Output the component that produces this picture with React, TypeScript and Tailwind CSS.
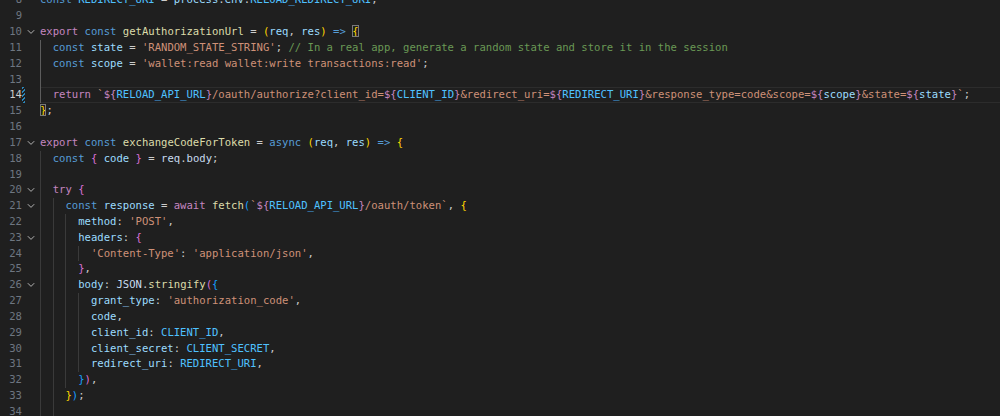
import React from 'react';

// token colours (VS Code Dark Modern-ish)
const KW = 'text-[#c586c0]';
const ST = 'text-[#569cd6]';
const FN = 'text-[#dcdcaa]';
const VA = 'text-[#9cdcfe]';
const VW = 'text-[#c8dcef]';
const CO = 'text-[#4fc1ff]';
const SR = 'text-[#ce9178]';
const CM = 'text-[#6a9955]';
const PN = 'text-[#cccccc]';
const TP = 'text-[#c586c0]';
const B1 = 'text-[#ffd700]';
const B2 = 'text-[#da70d6]';
const B3 = 'text-[#179fff]';
const MATCH = 'text-[#ffd700] outline outline-1 -outline-offset-1 outline-[#7a7a7a]';

type Tok = [string, string];

type Line = {
  n: number;
  indent: number;
  fold?: boolean;
  active?: boolean;
  toks: Tok[];
};

const lines: Line[] = [
  {
    n: 8,
    indent: 0,
    toks: [
      ['const ', ST],
      ['REDIRECT_URI', CO],
      [' = ', PN],
      ['process', VA],
      ['.', PN],
      ['env', VA],
      ['.', PN],
      ['RELOAD_REDIRECT_URI', CO],
      [';', PN],
    ],
  },
  { n: 9, indent: 0, toks: [] },
  {
    n: 10,
    indent: 0,
    fold: true,
    toks: [
      ['export ', KW],
      ['const ', ST],
      ['getAuthorizationUrl', FN],
      [' = ', PN],
      ['(', B1],
      ['req', VA],
      [', ', PN],
      ['res', VA],
      [')', B1],
      [' ', PN],
      ['=>', ST],
      [' ', PN],
      ['{', MATCH],
    ],
  },
  {
    n: 11,
    indent: 1,
    toks: [
      ['const ', ST],
      ['state', VA],
      [' = ', PN],
      ["'RANDOM_STATE_STRING'", SR],
      ['; ', PN],
      ['// In a real app, generate a random state and store it in the session', CM],
    ],
  },
  {
    n: 12,
    indent: 1,
    toks: [
      ['const ', ST],
      ['scope', VA],
      [' = ', PN],
      ["'wallet:read wallet:write transactions:read'", SR],
      [';', PN],
    ],
  },
  { n: 13, indent: 1, toks: [] },
  {
    n: 14,
    indent: 1,
    active: true,
    toks: [
      ['return ', KW],
      ['`', SR],
      ['${', TP],
      ['RELOAD_API_URL', CO],
      ['}', TP],
      ['/oauth/authorize?client_id=', SR],
      ['${', TP],
      ['CLIENT_ID', CO],
      ['}', TP],
      ['&redirect_uri=', SR],
      ['${', TP],
      ['REDIRECT_URI', CO],
      ['}', TP],
      ['&response_type=code&scope=', SR],
      ['${', TP],
      ['scope', VA],
      ['}', TP],
      ['&state=', SR],
      ['${', TP],
      ['state', VA],
      ['}', TP],
      ['`', SR],
      [';', PN],
    ],
  },
  {
    n: 15,
    indent: 0,
    toks: [
      ['}', MATCH],
      [';', PN],
    ],
  },
  { n: 16, indent: 0, toks: [] },
  {
    n: 17,
    indent: 0,
    fold: true,
    toks: [
      ['export ', KW],
      ['const ', ST],
      ['exchangeCodeForToken', FN],
      [' = ', PN],
      ['async ', ST],
      ['(', B1],
      ['req', VA],
      [', ', PN],
      ['res', VA],
      [')', B1],
      [' ', PN],
      ['=>', ST],
      [' ', PN],
      ['{', B1],
    ],
  },
  {
    n: 18,
    indent: 1,
    toks: [
      ['const ', ST],
      ['{', B2],
      [' ', PN],
      ['code', VA],
      [' ', PN],
      ['}', B2],
      [' = ', PN],
      ['req', VW],
      ['.', PN],
      ['body', VW],
      [';', PN],
    ],
  },
  { n: 19, indent: 1, toks: [] },
  {
    n: 20,
    indent: 1,
    fold: true,
    toks: [
      ['try ', KW],
      ['{', B2],
    ],
  },
  {
    n: 21,
    indent: 2,
    fold: true,
    toks: [
      ['const ', ST],
      ['response', VA],
      [' = ', PN],
      ['await ', KW],
      ['fetch', FN],
      ['(', B3],
      ['`', SR],
      ['${', TP],
      ['RELOAD_API_URL', CO],
      ['}', TP],
      ['/oauth/token', SR],
      ['`', SR],
      [', ', PN],
      ['{', B1],
    ],
  },
  {
    n: 22,
    indent: 3,
    toks: [
      ['method', VA],
      [': ', PN],
      ["'POST'", SR],
      [',', PN],
    ],
  },
  {
    n: 23,
    indent: 3,
    fold: true,
    toks: [
      ['headers', VA],
      [': ', PN],
      ['{', B2],
    ],
  },
  {
    n: 24,
    indent: 4,
    toks: [
      ["'Content-Type'", SR],
      [': ', PN],
      ["'application/json'", SR],
      [',', PN],
    ],
  },
  {
    n: 25,
    indent: 3,
    toks: [
      ['}', B2],
      [',', PN],
    ],
  },
  {
    n: 26,
    indent: 3,
    fold: true,
    toks: [
      ['body', VA],
      [': ', PN],
      ['JSON', VW],
      ['.', PN],
      ['stringify', FN],
      ['(', B2],
      ['{', B3],
    ],
  },
  {
    n: 27,
    indent: 4,
    toks: [
      ['grant_type', VA],
      [': ', PN],
      ["'authorization_code'", SR],
      [',', PN],
    ],
  },
  {
    n: 28,
    indent: 4,
    toks: [
      ['code', VA],
      [',', PN],
    ],
  },
  {
    n: 29,
    indent: 4,
    toks: [
      ['client_id', VA],
      [': ', PN],
      ['CLIENT_ID', CO],
      [',', PN],
    ],
  },
  {
    n: 30,
    indent: 4,
    toks: [
      ['client_secret', VA],
      [': ', PN],
      ['CLIENT_SECRET', CO],
      [',', PN],
    ],
  },
  {
    n: 31,
    indent: 4,
    toks: [
      ['redirect_uri', VA],
      [': ', PN],
      ['REDIRECT_URI', CO],
      [',', PN],
    ],
  },
  {
    n: 32,
    indent: 3,
    toks: [
      ['}', B3],
      [')', B2],
      [',', PN],
    ],
  },
  {
    n: 33,
    indent: 2,
    toks: [
      ['}', B1],
      [')', B3],
      [';', PN],
    ],
  },
  { n: 34, indent: 2, toks: [] },
];

const Chevron = () => (
  <svg width="8" height="6" viewBox="0 0 8 6" className="block">
    <polyline
      points="0.8,1.2 4,4.4 7.2,1.2"
      fill="none"
      stroke="#b4b4b4"
      strokeWidth="1"
    />
  </svg>
);

const CodeLine = ({ line }: { line: Line }) => {
  // lines 11-14 sit inside the block where the cursor is
  const activeGuide = line.n >= 11 && line.n <= 14;

  return (
    <div className="flex h-[15.83px] items-stretch">
      <div
        className={`w-[22px] shrink-0 text-right leading-[15.83px] ${
          line.n === 14 ? 'text-[#cccccc]' : 'text-[#6e7681]'
        }`}
      >
        {line.n}
      </div>
      <div className="w-[4px] shrink-0">
        {line.active && (
          <div className="h-full w-[3px] bg-[repeating-linear-gradient(-45deg,#2b86b8_0px,#2b86b8_1.5px,transparent_1.5px,transparent_3px)]" />
        )}
      </div>
      <div className="flex w-[14px] shrink-0 items-center pl-[1px]">
        {line.fold && <Chevron />}
      </div>
      <div
        className={`flex flex-1 whitespace-pre leading-[15.83px] ${
          line.active
            ? 'shadow-[inset_0_1px_0_#2c2c2c,inset_0_-1px_0_#2c2c2c]'
            : ''
        }`}
      >
        {Array.from({ length: line.indent }).map((_, i) => (
          <span
            key={i}
            className={`inline-block w-[2ch] shrink-0 border-l ${
              activeGuide && i === 0 ? 'border-[#5c5c5c]' : 'border-[#3a3a3a]'
            }`}
          />
        ))}
        <span>
          {line.toks.map(([text, cls], i) => (
            <span key={i} className={cls}>
              {text}
            </span>
          ))}
        </span>
      </div>
    </div>
  );
};

export default function App() {
  return (
    <div className="h-[416px] w-[1000px] overflow-hidden bg-[#1f1f1f] font-['DejaVu_Sans_Mono',monospace] text-[10.58px] text-[#cccccc]">
      <div className="-mt-[7.6px] flex flex-col">
        {lines.map((line) => (
          <CodeLine key={line.n} line={line} />
        ))}
      </div>
    </div>
  );
}
